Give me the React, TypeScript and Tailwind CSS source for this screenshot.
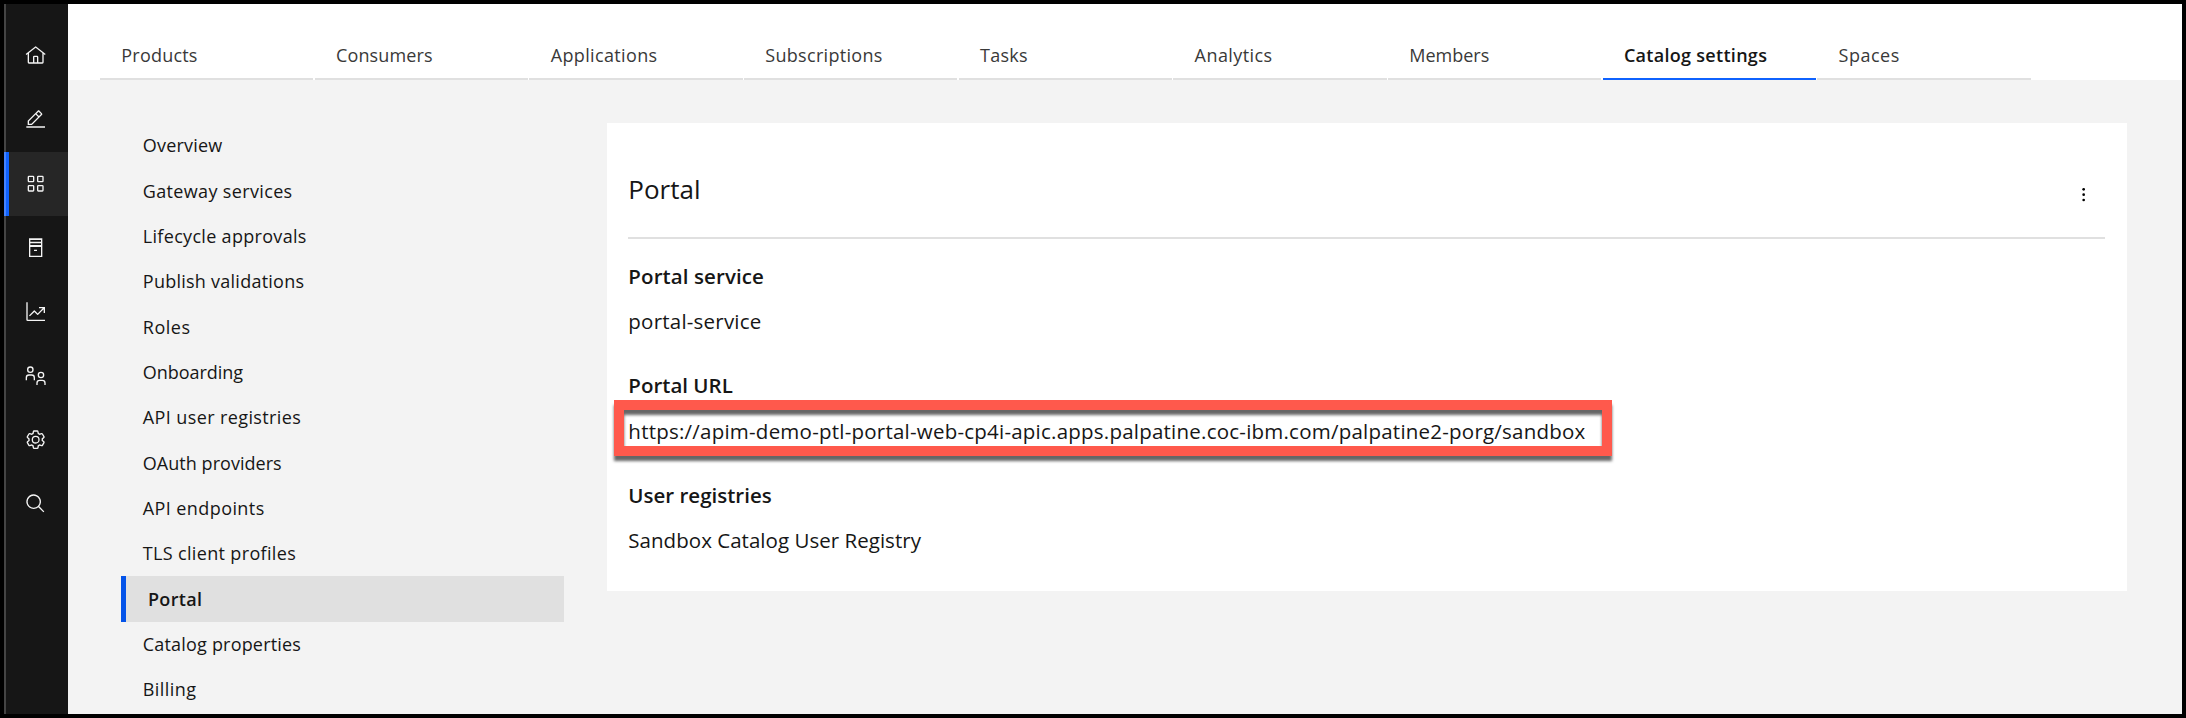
import React from "react";

const Icon = ({ children }: { children: React.ReactNode }) => (
  <svg viewBox="0 0 32 32" className="h-[21.33px] w-[21.33px] overflow-visible" fill="currentColor">
    {children}
  </svg>
);

const icons: React.ReactNode[] = [
  <path d="M16.6123 2.2138a1.01 1.01 0 0 0-1.2427 0L1 13.4194l1.2427 1.5717L4 13.6210V26a2.0041 2.0041 0 0 0 2 2H26a2.0037 2.0037 0 0 0 2-2V13.63L29.7573 15 31 13.4282ZM18 26H14V18h4Zm2 0V18a2.0023 2.0023 0 0 0-2-2H14a2.002 2.002 0 0 0-2 2v8H6V12.0615l10-7.79 10 7.8005V26Z" />,
  <path d="M2 26H30V28H2zM25.4 9c.8-.8.8-2 0-2.8l-3.6-3.6c-.8-.8-2-.8-2.8 0l-15 15V24h6.400L25.4 9zM20.4 4L24 7.600l-3 3L17.400 7 20.400 4zM6 22v-3.600l10-10 3.600 3.600-10 10H6z" />,
  <path d="M12 4H6A2 2 0 0 0 4 6v6a2 2 0 0 0 2 2h6a2 2 0 0 0 2-2V6a2 2 0 0 0-2-2Zm0 8H6V6h6ZM26 4H20a2 2 0 0 0-2 2v6a2 2 0 0 0 2 2h6a2 2 0 0 0 2-2V6a2 2 0 0 0-2-2Zm0 8H20V6h6ZM12 18H6a2 2 0 0 0-2 2v6a2 2 0 0 0 2 2h6a2 2 0 0 0 2-2V20a2 2 0 0 0-2-2Zm0 8H6V20h6ZM26 18H20a2 2 0 0 0-2 2v6a2 2 0 0 0 2 2h6a2 2 0 0 0 2-2V20a2 2 0 0 0-2-2Zm0 8H20V20h6Z" />,
  <path fillRule="evenodd" d="M6 2H26V30H6ZM8 4.500V7H24V4.500ZM8 9.500V12H24V9.500ZM8 15V28H24V15ZM13.500 19H18V21H13.500Z" />,
  <path d="M4 2H2V28a2 2 0 0 0 2 2H30V28H4ZM21 9v2h5.590L19 18.590l-4.290-4.300a1 1 0 0 0-1.420 0L6 21.590 7.410 23 14 16.410l4.290 4.300a1 1 0 0 0 1.420 0L28 12.410V18h2V9Z" />,
  <g fill="none" stroke="currentColor" strokeWidth="2">
    <circle cx="8" cy="7" r="4" />
    <path d="M2 23V19a4 4 0 0 1 4-4h4a4 4 0 0 1 4 4v4" />
    <circle cx="24" cy="15" r="4" />
    <path d="M18 30V27a4 4 0 0 1 4-4h4a4 4 0 0 1 4 4v3" />
  </g>,
  <path d="M27 16.76c0-.25 0-.5 0-.76s0-.51 0-.77l1.920-1.680A2 2 0 0 0 29.300 11L26.940 7a2 2 0 0 0-1.730-1 2 2 0 0 0-.64.100l-2.430.820a11.350 11.350 0 0 0-1.310-.75l-.51-2.520a2 2 0 0 0-2-1.610H13.640a2 2 0 0 0-2 1.610l-.51 2.520a11.480 11.480 0 0 0-1.320.75L7.430 6.060A2 2 0 0 0 6.790 6a2 2 0 0 0-1.730 1L2.700 11a2 2 0 0 0 .41 2.510L5 15.240c0 .25 0 .5 0 .76s0 .51 0 .77L3.110 18.450A2 2 0 0 0 2.700 21L5.060 25a2 2 0 0 0 1.730 1 2 2 0 0 0 .64-.1l2.430-.82a11.350 11.350 0 0 0 1.310.75l.51 2.520a2 2 0 0 0 2 1.610h4.720a2 2 0 0 0 2-1.610l.51-2.520a11.480 11.480 0 0 0 1.320-.75l2.420.82a2 2 0 0 0 .64.1 2 2 0 0 0 1.730-1L29.300 21a2 2 0 0 0-.41-2.510ZM25.210 24l-3.430-1.160a8.860 8.860 0 0 1-2.710 1.570L18.360 28H13.640l-.71-3.550a9.360 9.360 0 0 1-2.700-1.570L6.790 24 4.430 20l2.720-2.400a8.900 8.900 0 0 1 0-3.130L4.430 12 6.790 8l3.430 1.160a8.860 8.860 0 0 1 2.710-1.570L13.640 4h4.720l.71 3.550a9.360 9.360 0 0 1 2.700 1.570L25.210 8 27.570 12l-2.720 2.400a8.900 8.900 0 0 1 0 3.130L27.570 20ZM16 22a6 6 0 1 1 6-6 5.940 5.940 0 0 1-6 6Zm0-10a3.910 3.910 0 0 0-4 4 3.910 3.910 0 0 0 4 4 3.910 3.910 0 0 0 4-4 3.910 3.910 0 0 0-4-4Z" />,
  <path d="M29 27.586l-7.552-7.552a11.018 11.018 0 1 0-1.414 1.414L27.586 29ZM4 13a9 9 0 1 1 9 9 9.010 9.010 0 0 1-9-9Z" />,
];

const tabs: [string, string][] = [
  ["Products", "tracking-[0.2px]"],
  ["Consumers", "tracking-[0.13px]"],
  ["Applications", "tracking-[0.36px]"],
  ["Subscriptions", "tracking-[0.3px]"],
  ["Tasks", "tracking-[0.3px]"],
  ["Analytics", "tracking-[0.43px]"],
  ["Members", "tracking-normal"],
  ["Catalog settings", "tracking-[0.29px]"],
  ["Spaces", "tracking-[0.5px]"],
];

const sections: [string, string][] = [
  ["Overview", "tracking-[0.2px]"],
  ["Gateway services", "tracking-[0.35px]"],
  ["Lifecycle approvals", "tracking-[0.31px]"],
  ["Publish validations", "tracking-[0.25px]"],
  ["Roles", "tracking-[0.5px]"],
  ["Onboarding", "tracking-[-0.03px]"],
  ["API user registries", "tracking-[0.39px]"],
  ["OAuth providers", "tracking-[0.04px]"],
  ["API endpoints", "tracking-[0.41px]"],
  ["TLS client profiles", "tracking-[0.34px]"],
  ["Portal", "tracking-[0.3px]"],
  ["Catalog properties", "tracking-[0.19px]"],
  ["Billing", "tracking-[0.45px]"],
];

export default function App() {
  return (
    <div className="flex h-[718px] w-[2186px] overflow-hidden border-4 border-black bg-[#f3f3f3] font-['Open_Sans',sans-serif] text-[#161616]">
      <nav className="flex w-16 shrink-0 flex-col bg-[#161616] pt-[20px] text-[#f4f4f4] shadow-[inset_2px_0_0_#444]">
        {icons.map((icon, i) => (
          <a
            key={i}
            className={
              i === 2
                ? "flex h-16 items-center justify-center bg-[#262626] pr-px shadow-[inset_2px_0_0_#4583fe,inset_5px_0_0_#0f62fe]"
                : "flex h-16 items-center justify-center pr-px"
            }
          >
            <Icon>{icon}</Icon>
          </a>
        ))}
      </nav>

      <div className="flex min-w-0 flex-1 flex-col">
        <header className="flex h-[76px] shrink-0 items-end gap-[1.333px] bg-white pl-8">
          {tabs.map(([label, tracking]) => (
            <div
              key={label}
              className={
                label === "Catalog settings"
                  ? "flex h-[52px] w-[213.333px] items-center border-b-2 border-[#0f62fe] pl-[21.33px] pt-[5px] text-[18px] font-semibold"
                  : "flex h-[52px] w-[213.333px] items-center border-b-2 border-[#e0e0e0] pl-[21.33px] pt-[5px] text-[18px] text-[#393939]"
              }
            >
              <span className={tracking}>{label}</span>
            </div>
          ))}
        </header>

        <div className="flex flex-1 items-start pl-[53px] pt-[42.67px]">
          <ul className="w-[443px] shrink-0 pt-[0.4px]">
            {sections.map(([label, tracking]) => (
              <li
                key={label}
                className={
                  label === "Portal"
                    ? "flex h-[45.333px] items-center border-l-[5px] border-[#0353e9] bg-[#e0e0e0] pl-[22px] pt-px text-[18px] font-semibold"
                    : "flex h-[45.333px] items-center pl-[21.8px] text-[18px]"
                }
              >
                <span className={tracking}>{label}</span>
              </li>
            ))}
          </ul>

          <main className="ml-[43px] h-[468px] w-[1520px] bg-white pl-[21.33px] pr-[22px] text-[20.5px] leading-[28px]">
            <div className="flex h-[116px] items-center justify-between border-b-2 border-[#e0e0e0]">
              <h1 className="mt-[19px] text-[26px]">Portal</h1>
              <svg viewBox="0 0 32 32" className="mr-[10.67px] mt-[30px] h-[21.33px] w-[21.33px]">
                <circle cx="16" cy="8" r="2" />
                <circle cx="16" cy="16" r="2" />
                <circle cx="16" cy="24" r="2" />
              </svg>
            </div>
            <dl>
              <dt className="mt-[23px] font-semibold tracking-[0.1px]">Portal service</dt>
              <dd className="mt-[17px] tracking-[0.22px]">portal-service</dd>
              <dt className="mt-[36px] font-semibold">Portal URL</dt>
              <dd className="relative mt-[18px] whitespace-nowrap tracking-[0.226px]">
                <div className="absolute left-[-14.33px] top-[-16.67px] h-[56px] w-[998px] border-[10px] border-[#ff594c] drop-shadow-[0_5px_1.5px_rgba(0,0,0,0.6)]" />
                <span className="relative">
                  https://apim-demo-ptl-portal-web-cp4i-apic.apps.palpatine.coc-ibm.com/palpatine2-porg/sandbox
                </span>
              </dd>
              <dt className="mt-[36px] font-semibold">User registries</dt>
              <dd className="mt-[17px] tracking-[0.03px]">Sandbox Catalog User Registry</dd>
            </dl>
          </main>
        </div>
      </div>
    </div>
  );
}
